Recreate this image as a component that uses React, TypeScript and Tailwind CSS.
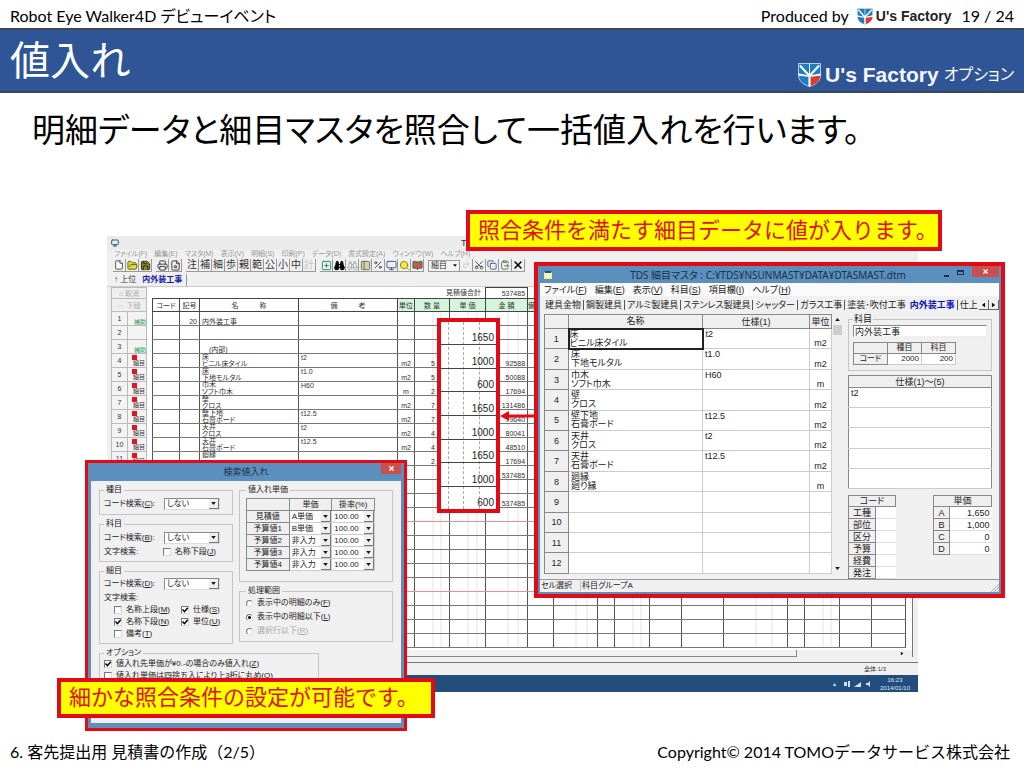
import type { ReactNode } from "react";
import {
  File,
  FolderOpen,
  Save,
  Printer,
  FileSearch,
  Scissors,
  Copy,
  ClipboardPaste,
  X,
  Binoculars,
  Monitor,
  Search,
  Percent,
  PanelLeft,
  SquarePlus,
  BookOpen,
  Redo2,
} from "lucide-react";

function Shield({ className }: { className: string }) {
  return (
    <svg viewBox="0 0 24 25" className={className} aria-hidden="true">
      <path d="M.5.500h23V12c0 7-5 10.500-11.500 12.500C5.500 22.500.5 19 .5 12z" fill="#1f7dc1" stroke="#dfe9f3" strokeWidth=".8" />
      <path d="M12 13h11c-.3 5.500-4 9-11 11z" fill="#e0392f" />
      <path d="M0 10.800L11 13l-1 1.300L0 13zM24 10.800L13 13l1 1.300 10-1.300z" fill="#fff" />
      <path d="M2 2.500L12 13.500 22 2.500" stroke="#fff" strokeWidth="2.200" fill="none" />
      <path d="M12 .5V12" stroke="#fff" strokeWidth="1" />
      <path d="M12 11.500v13" stroke="#fff" strokeWidth="2.200" />
    </svg>
  );
}

function Caret({ className }: { className: string }) {
  return (
    <svg viewBox="0 0 6 4" className={className} aria-hidden="true">
      <path d="M0 0h6L3 4z" fill="#111" />
    </svg>
  );
}

function Combo({ label, value, flat }: { label: string; value: string; flat?: boolean }) {
  return (
    <span
      className={
        flat
          ? "relative flex h-[11px] items-center bg-white"
          : "relative flex h-3 w-14 items-center border border-[#8a8a8a] border-r-[#ddd] border-b-[#ddd] bg-white"
      }
    >
      <select aria-label={label} defaultValue={value} className="h-full w-full appearance-none bg-transparent pl-[2px] leading-[10px]">
        <option>{value}</option>
      </select>
      <span className="pointer-events-none absolute inset-y-0 right-0 flex w-[10px] items-center justify-center border-r border-b border-[#777] bg-[#eee]">
        <Caret className="h-[3px] w-[5px]" />
      </span>
    </span>
  );
}

function Check({ label, k, checked }: { label: string; k: string; checked?: boolean }) {
  return (
    <label className="flex h-3 items-center gap-1 whitespace-nowrap">
      <span className="relative flex size-2">
        <input
          type="checkbox"
          defaultChecked={checked}
          className="peer size-2 appearance-none border border-[#d8d8d8] border-t-[#777] border-l-[#777] bg-white"
        />
        <svg viewBox="0 0 8 8" className="pointer-events-none absolute inset-0 hidden size-2 peer-checked:block" aria-hidden="true">
          <path d="M1.500 3.500l2 2.200L6.800 1.800" stroke="#000" strokeWidth="1.500" fill="none" />
        </svg>
      </span>
      <span>
        {label}(<u>{k}</u>)
      </span>
    </label>
  );
}

function Radio({ label, k, checked, disabled }: { label: string; k: string; checked?: boolean; disabled?: boolean }) {
  return (
    <label className={disabled ? "flex h-[14px] items-center gap-1 text-[#aaa]" : "flex h-[14px] items-center gap-1"}>
      <span className="relative flex size-[7px] items-center justify-center">
        <input
          type="radio"
          name="range"
          defaultChecked={checked}
          disabled={disabled}
          className="peer size-[7px] appearance-none rounded-full border border-[#ddd] border-t-[#777] border-l-[#777] bg-white"
        />
        <span className="pointer-events-none absolute hidden size-[3px] rounded-full bg-black peer-checked:block" />
      </span>
      <span>
        {label}(<u>{k}</u>)
      </span>
    </label>
  );
}

function Group({ title, className, children }: { title: string; className: string; children: ReactNode }) {
  return (
    <fieldset className={`border border-[#c4c4c4] ${className}`}>
      <legend className="px-[2px] leading-[10px]">{title}</legend>
      {children}
    </fieldset>
  );
}

type LedgerRow = { code?: string; mark?: "sub" | "item"; a?: string; b?: string; spec?: string; unit?: string; qty?: string; sum?: string };

const ledger: LedgerRow[] = [
  { mark: "sub", code: "20", b: "内外装工事" },
  {},
  { mark: "sub", b: "　(内部)" },
  { mark: "item", a: "床", b: "ビニル床タイル", spec: "t2", unit: "m2", qty: "5", sum: "92588" },
  { mark: "item", a: "床", b: "下地モルタル", spec: "t1.0", unit: "m2", qty: "5", sum: "50088" },
  { mark: "item", a: "巾木", b: "ソフト巾木", spec: "H60", unit: "m", qty: "2", sum: "17694" },
  { mark: "item", a: "壁", b: "クロス", unit: "m2", qty: "7", sum: "131486" },
  { mark: "item", a: "壁下地", b: "石膏ボード", spec: "t12.5", unit: "m2", qty: "7", sum: "79640" },
  { mark: "item", a: "天井", b: "クロス", spec: "t2", unit: "m2", qty: "4", sum: "80041" },
  { mark: "item", a: "天井", b: "石膏ボード", spec: "t12.5", unit: "m2", qty: "4", sum: "48510" },
  { mark: "item", a: "廻縁", qty: "2", sum: "17694" },
  { sum: "537485" },
  {},
  { sum: "537485" },
  {},
  {},
  {},
  {},
  {},
  {},
  {},
  {},
  {},
  {},
];

const numberedRows = 11;
const tailColumns = ["a", "b", "c", "d", "e", "f", "g", "h", "i", "j"];
const faint = "bg-[linear-gradient(to_right,transparent_50%,#e2e2e2_50%,#e2e2e2_calc(50%+1px),transparent_0,transparent_75%,#e2e2e2_75%,#e2e2e2_calc(75%+1px),transparent_0)]";

function LedgerTable() {
  return (
    <table className="w-full table-fixed border-collapse text-[7px] leading-[7px] text-[#333]">
      <colgroup>
        <col className="w-4" />
        <col className="w-[19px]" />
        <col className="w-[6px]" />
        <col className="w-[27px]" />
        <col className="w-5" />
        <col className="w-[99px]" />
        <col className="w-[99px]" />
        <col className="w-[17px]" />
        <col className="w-[35px]" />
        <col className="w-9" />
        <col className="w-[42px]" />
        <col className="w-[26px]" />
        <col className="w-11" />
        <col className="w-[17px]" />
        <col className="w-[35px]" />
        <col className="w-8" />
        <col className="w-[42px]" />
        <col className="w-16" />
        <col className="w-[17px]" />
        <col className="w-[35px]" />
        <col className="w-8" />
        <col />
      </colgroup>
      <thead>
        <tr className="h-[11px]">
          <th colSpan={2} className="border border-[#bbb] bg-[#eee] font-normal text-[#aaa]">⌂ 取消</th>
          <td colSpan={6} />
          <td colSpan={2} className="pr-1 text-right whitespace-nowrap">見積値合計</td>
          <td className="border border-[#444] pr-[2px] text-right">537485</td>
          <td colSpan={11} />
        </tr>
        <tr className="h-[13px]">
          <th colSpan={2} className="border border-[#bbb] bg-[#eee] font-normal text-[#aaa]">⇔ 下段</th>
          <td />
          <th className="border border-[#444] font-normal">コード</th>
          <th className="border border-[#444] font-normal">記号</th>
          <th className="border border-[#444] font-normal">名　　　称</th>
          <th className="border border-[#444] font-normal">備　　　考</th>
          <th className="border border-[#444] bg-[#d3f5da] font-normal">単位</th>
          <th className="border border-[#444] bg-[#d3f5da] font-normal">数 量</th>
          <th className="border border-[#444] bg-[#d3f5da] font-normal">単 価</th>
          <th className="border border-[#444] bg-[#d3f5da] font-normal">金 額</th>
          <th className="overflow-hidden border border-[#444] bg-[#d3f5da] text-left font-normal">備</th>
          {tailColumns.map((c) => (
            <td key={c} className="border border-[#444]" />
          ))}
        </tr>
      </thead>
      <tbody>
        {ledger.map((r, i) => {
          const cell = i === 14 || i === 19 ? "border-x border-x-[#555] border-b border-b-[#f08c8c] p-0" : "border-x border-x-[#555] border-b border-b-[#777] p-0";
          return (
            <tr key={i} className="h-[14px]">
              <td className="border border-[#bbb] bg-[#f3f3f3] p-0 text-center">{i < numberedRows ? i + 1 : null}</td>
              <td className="border border-[#bbb] bg-[#f3f3f3] p-0 text-[6px] leading-[6px]">
                {r.mark === "sub" && <span className="block pt-[6px] text-right text-[#2f9e63]">補助</span>}
                {r.mark === "item" && (
                  <span className="block pl-1">
                    <span className="block size-[5px] bg-[#e3121b]" />
                    <span className="block text-center">細目</span>
                  </span>
                )}
              </td>
              <td className="p-0" />
              <td className={cell} />
              <td className={`${cell} pr-[2px] text-right align-bottom`}>{r.code}</td>
              <td className={r.b ? `${cell} pl-[2px] align-bottom whitespace-nowrap` : `${cell} pl-[2px] align-top whitespace-nowrap`}>
                {r.a && <span className="block leading-[6px]">{r.a}</span>}
                {r.b && <span className="block">{r.b}</span>}
              </td>
              <td className={`${cell} pl-[2px] align-top`}>{r.spec}</td>
              <td className={`${cell} text-center align-bottom`}>{r.unit}</td>
              <td className={`${cell} ${faint} pl-4 align-bottom`}>{r.qty}</td>
              <td className={`${cell} ${faint}`} />
              <td className={`${cell} ${faint} pr-[2px] text-right align-bottom`}>{r.sum}</td>
              <td className={cell} />
              {tailColumns.map((c) => (
                <td key={c} className={`${cell} ${"bdegij".includes(c) ? "" : faint}`} />
              ))}
            </tr>
          );
        })}
      </tbody>
    </table>
  );
}

function Tool({ label, children }: { label: string; children: ReactNode }) {
  return (
    <button aria-label={label} className="flex h-[13px] w-[13px] shrink-0 items-center justify-center border-r border-b border-[#999] text-[10px] leading-[12px] text-[#333]">
      {children}
    </button>
  );
}

function LedgerWindow() {
  return (
    <section className="absolute top-11 left-[107px] flex h-[456px] w-[811px] flex-col bg-[#f0f0f0] text-[#333]">
      <div className="flex h-[14px] items-center bg-[#ebebeb] pl-1">
        <Monitor className="size-2 text-[#267]" strokeWidth={3} />
        <h2 className="pl-[342px] text-[9px] leading-[12px]">TDS</h2>
      </div>
      <nav className="flex h-2 items-center gap-[7px] pl-[7px] text-[7px] leading-[8px] text-[#999]">
        {["ファイル(F)", "編集(E)", "マスタ(M)", "表示(V)", "明細(S)", "印刷(P)", "データ(D)", "書式設定(A)", "ウィンドウ(W)", "ヘルプ(H)"].map((m) => (
          <a key={m} href="#" className="whitespace-nowrap">{m}</a>
        ))}
      </nav>
      <div className="flex h-[15px] items-center pl-[6px]">
        <Tool label="新規"><File className="size-[10px]" fill="#fff" /></Tool>
        <Tool label="開く"><FolderOpen className="size-[11px] text-[#555f00]" fill="#e8d44a" /></Tool>
        <Tool label="保存"><Save className="size-[11px] text-[#222]" fill="#8c8c20" /></Tool>
        <span className="w-1" />
        <Tool label="印刷"><Printer className="size-[11px]" /></Tool>
        <Tool label="プレビュー"><FileSearch className="size-[11px]" /></Tool>
        <span className="w-1" />
        {["注", "補", "細", "歩", "親", "範", "公", "小", "中"].map((t) => (
          <Tool key={t} label={t}>{t}</Tool>
        ))}
        <Tool label="計"><span className="text-[#c4c4c4]">計</span></Tool>
        <span className="w-1" />
        <Tool label="追加"><SquarePlus className="size-[11px] text-[#178a5a]" /></Tool>
        <Tool label="検索"><Binoculars className="size-[11px] text-black" fill="#000" /></Tool>
        <Tool label="次を検索"><Binoculars className="size-[11px] text-[#aaa]" /></Tool>
        <Tool label="一覧"><PanelLeft className="size-[11px] text-[#666]" fill="#d8d4a0" /></Tool>
        <Tool label="率"><Percent className="size-[10px]" /></Tool>
        <Tool label="画面"><Monitor className="size-[11px] text-[#3c4a9c]" /></Tool>
        <Tool label="参照"><Search className="size-[11px] text-[#8a8200]" fill="#f2e93c" /></Tool>
        <Tool label="台帳"><BookOpen className="size-[11px] text-[#177a4a]" fill="#c55" /></Tool>
        <span className="relative ml-1 flex h-3 w-8 items-center border border-[#999] bg-[#f4f4f4] text-[8px]">
          <select aria-label="種別" defaultValue="細目" className="w-full appearance-none bg-transparent pl-[2px] leading-[10px]">
            <option>細目</option>
          </select>
          <Caret className="pointer-events-none absolute right-[2px] h-[3px] w-1" />
        </span>
        <Tool label="やり直し"><Redo2 className="size-2 text-[#bbb]" /></Tool>
        <Tool label="切り取り"><Scissors className="size-[10px] -rotate-90" /></Tool>
        <Tool label="コピー"><Copy className="size-[10px] text-[#447]" /></Tool>
        <Tool label="貼り付け"><ClipboardPaste className="size-[10px] text-[#464]" /></Tool>
        <Tool label="削除"><X className="size-3 text-black" strokeWidth={3} /></Tool>
      </div>
      <div className="flex h-[14px] items-center gap-[6px] border-b border-[#ccc] pl-[7px] text-[8px] leading-[12px]">
        <span>↑ 上位</span>
        <b className="border-r border-[#999] pr-1 text-[#1818b0]">内外装工事</b>
      </div>
      <div className="mr-[5px] ml-1 flex-1 border-r border-[#777] bg-white pr-[6px]">
        <LedgerTable />
      </div>
      <div className="mr-[5px] ml-1 flex h-[7px] items-center justify-between border-r border-[#777]">
        <span className="h-[7px] w-[686px] border-r border-b border-[#888] bg-[#f2f2f2]" />
        <Caret className="mr-2 h-[3px] w-1 -rotate-90" />
      </div>
      <div className="mt-[5px] flex h-[13px] items-center justify-end border-t border-[#777] pr-8 text-[6px] leading-[10px]">
        <span>全体:1/3</span>
      </div>
      <footer className="flex h-[17px] items-center justify-end gap-[6px] bg-[#214e7d] pr-2 text-[6px] leading-[8px] text-[#dfe8f2]">
        <span>▴</span>
        <svg viewBox="0 0 32 8" className="h-2 w-8" aria-hidden="true">
          <path d="M2 2h3v4H2zM6 1h2v6H6zM12 7l7-5v5zM24 3h2l2-2v6l-2-2h-2z" fill="#d5e0ea" />
        </svg>
        <span className="text-center">16:23<br />2014/01/10</span>
      </footer>
    </section>
  );
}

const prices = ["1650", "1000", "600", "1650", "1000", "1650", "1000", "600"];

function PriceStrip() {
  return (
    <section className="absolute top-[126px] left-[437px] h-[195px] w-[63px] border-4 border-[#e30b13] bg-white">
      <div className="pointer-events-none absolute inset-0 grid grid-cols-[8px_15px_16px_1fr]" aria-hidden="true">
        <span className="border-r border-dashed border-[#aaa]" />
        <span className="border-r border-dashed border-[#aaa]" />
        <span className="border-r border-dashed border-[#aaa]" />
      </div>
      <table className="relative h-full w-full border-collapse text-[10px] leading-[13px] text-[#222]">
        <tbody>
          {prices.map((p, i) => (
            <tr key={i} className="border-b border-[#444] last:border-b-0">
              <td className="p-0 pr-[2px] text-right align-bottom">{p}</td>
            </tr>
          ))}
        </tbody>
      </table>
    </section>
  );
}

const items = [
  ["床", "ビニル床タイル", "t2", "m2"],
  ["床", "下地モルタル", "t1.0", "m2"],
  ["巾木", "ソフト巾木", "H60", "m"],
  ["壁", "クロス", "", "m2"],
  ["壁下地", "石膏ボード", "t12.5", "m2"],
  ["天井", "クロス", "t2", "m2"],
  ["天井", "石膏ボード", "t12.5", "m2"],
  ["廻縁", "廻り縁", "", "m"],
  ["", "", "", ""],
  ["", "", "", ""],
  ["", "", "", ""],
  ["", "", "", ""],
];

const head = "border border-[#888] bg-[#efefef] p-0 font-normal";

function MasterWindow() {
  return (
    <section className="absolute top-[70px] left-[534px] flex h-[336px] w-[471px] flex-col border-4 border-[#e30b13] bg-[#5b8fbd] px-[2px] pb-[2px] text-[9px] leading-[10px] text-[#222]">
      <div className="flex h-[17px] items-center justify-between pl-1">
        <span className="h-2 w-2 border border-t-2 border-[#e8e8c0] border-t-[#2a4a9c] bg-[#fbf7a8]" />
        <h2 className="pl-10 font-['Noto_Sans','Noto_Sans_CJK_JP',sans-serif] text-[10px] leading-[14px] text-[#1d3247]">TDS 細目マスタ : C:¥TDS¥NSUNMAST¥DATA¥DTASMAST.dtm</h2>
        <span className="flex h-full items-start gap-2">
          <button aria-label="最小化" className="mt-[9px] h-[2px] w-[5px] bg-[#1d3247]" />
          <button aria-label="最大化" className="mt-1 h-[5px] w-[7px] border border-t-2 border-[#1d3247]" />
          <button aria-label="閉じる" className="flex h-[11px] w-[27px] items-center justify-center bg-[#c9504f] text-white">
            <X className="size-[7px]" strokeWidth={4} />
          </button>
        </span>
      </div>
      <nav className="flex h-[13px] items-center gap-2 bg-[#fafafa] pl-1">
        {[["ファイル", "F"], ["編集", "E"], ["表示", "V"], ["科目", "S"], ["項目欄", "I"], ["ヘルプ", "H"]].map(([m, k]) => (
          <a key={k} href="#">{m}(<u>{k}</u>)</a>
        ))}
      </nav>
      <div className="flex h-[18px] items-center overflow-hidden bg-[#f0f0f0] pl-[3px]">
        {["建具金物", "鋼製建具", "アルミ製建具", "ステンレス製建具", "シャッター", "ガラス工事", "塗装･吹付工事"].map((t, i) => (
          <button key={t} className={i < 6 ? "shrink-0 border-r border-[#555] px-[2px] whitespace-nowrap" : "shrink-0 px-[2px] whitespace-nowrap"}>{t}</button>
        ))}
        <button className="shrink-0 border-r border-[#555] px-[2px] font-bold whitespace-nowrap text-[#1010b8]">内外装工事</button>
        <button className="min-w-0 shrink overflow-hidden pl-[2px] whitespace-nowrap">仕上</button>
        <button aria-label="前へ" className="ml-auto flex h-[10px] w-[10px] shrink-0 items-center justify-center border-r border-b border-[#666] bg-[#f0f0f0]">
          <Caret className="h-1 w-[5px] rotate-90" />
        </button>
        <button aria-label="次へ" className="flex h-[10px] w-[10px] shrink-0 items-center justify-center border-r border-b border-[#666] bg-[#f0f0f0]">
          <Caret className="h-1 w-[5px] -rotate-90" />
        </button>
      </div>
      <div className="flex min-h-0 flex-1 bg-[#f0f0f0] pr-[7px] pl-1">
        <table className="h-[260px] w-[288px] table-fixed border-collapse bg-white">
          <colgroup>
            <col className="w-6" />
            <col className="w-[134px]" />
            <col />
            <col className="w-[22px]" />
          </colgroup>
          <thead>
            <tr className="h-[14px]">
              <th className={head} />
              <th className={head}>名称</th>
              <th className={head}>仕様(1)</th>
              <th className={head}>単位</th>
            </tr>
          </thead>
          <tbody>
            {items.map(([a, b, s, u], i) => (
              <tr key={i} className="h-5">
                <th className={head}>{i + 1}</th>
                <td className={i === 0 ? "border-2 border-[#222] p-0 leading-[9px]" : "border border-[#ccc] p-0 pl-[2px] leading-[9px]"}>
                  {a && <span className="block">{a}</span>}
                  {b && <span className="block">{b}</span>}
                </td>
                <td className="border border-[#ccc] p-0 pl-[2px] align-top">{s}</td>
                <td className="border border-[#ccc] p-0 text-center align-bottom">{u}</td>
              </tr>
            ))}
          </tbody>
        </table>
        <div className="mr-[5px] flex h-[260px] w-[11px] flex-col items-center bg-[#f0f0f0] py-1">
          <Caret className="h-[3px] w-[5px] rotate-180" />
          <span className="mt-1 h-[10px] w-[9px] bg-[#cdcdcd]" />
          <Caret className="mt-auto h-[3px] w-[5px]" />
        </div>
        <div className="flex flex-1 flex-col">
          <fieldset className="h-[58px] border border-[#c4c4c4] px-1">
            <legend className="px-px leading-[10px]">科目</legend>
            <input aria-label="科目" defaultValue="内外装工事" className="mt-px block h-3 w-full border border-[#eee] border-t-[#888] border-l-[#888] bg-white px-px" />
            <table className="mt-[5px] w-[103px] table-fixed border-collapse bg-white text-[8px] leading-[10px]">
              <tbody>
                <tr><th className={head} /><th className={head}>種目</th><th className={head}>科目</th></tr>
                <tr><th className={head}>コード</th><td className="border border-[#ccc] p-0 pr-[2px] text-right">2000</td><td className="border border-[#ccc] p-0 pr-[2px] text-right">200</td></tr>
              </tbody>
            </table>
          </fieldset>
          <table className="mt-1 h-[116px] w-full border-collapse border border-[#888] bg-white">
            <thead>
              <tr className="h-3"><th className={head}>仕様(1)～(5)</th></tr>
            </thead>
            <tbody>
              {["t2", "", "", "", ""].map((s, i) => (
                <tr key={i} className="h-5"><td className="border-b border-[#ccc] p-0 pl-[2px] align-top">{s}</td></tr>
              ))}
            </tbody>
          </table>
          <div className="mt-[6px] flex items-start justify-between">
            <table className="w-12 table-fixed border-collapse bg-white">
              <colgroup><col className="w-[27px]" /><col /></colgroup>
              <thead><tr><th colSpan={2} className={head}>コード</th></tr></thead>
              <tbody>
                {["工種", "部位", "区分", "予算", "経費", "発注"].map((c) => (
                  <tr key={c} className="h-3"><th className={head}>{c}</th><td className="border-b border-[#ddd] p-0" /></tr>
                ))}
              </tbody>
            </table>
            <table className="w-[59px] table-fixed border-collapse bg-white">
              <colgroup><col className="w-4" /><col /></colgroup>
              <thead><tr><th colSpan={2} className={head}>単価</th></tr></thead>
              <tbody>
                {[["A", "1,650"], ["B", "1,000"], ["C", "0"], ["D", "0"]].map(([c, v]) => (
                  <tr key={c} className="h-3"><th className={head}>{c}</th><td className="border-b border-[#ddd] p-0 pr-[2px] text-right">{v}</td></tr>
                ))}
              </tbody>
            </table>
          </div>
        </div>
      </div>
      <footer className="flex h-[13px] items-center gap-2 border-t border-[#999] bg-[#f0f0f0] pl-px text-[8px]">
        <span>セル選択</span>
        <span className="border-l border-[#bbb] pl-px">科目グループA</span>
        <svg viewBox="0 0 8 8" className="mt-1 ml-auto size-2" aria-hidden="true">
          <path d="M0 8l8-8M3 8l5-5M6 8l2-2" stroke="#999" strokeWidth=".8" />
        </svg>
      </footer>
    </section>
  );
}

const rates = [["見積値", "A単価"], ["予算値1", "B単価"], ["予算値2", "非入力"], ["予算値3", "非入力"], ["予算値4", "非入力"]];

function SearchDialog() {
  return (
    <section className="absolute top-[268px] left-[85px] flex h-[271px] w-[322px] flex-col border-[3px] border-[#e30b13] bg-[#5b8fbd] px-[3px] pb-[5px] text-[8px] leading-[10px] text-[#222]">
      <div className="relative flex h-[18px] items-center justify-center text-[9px] text-[#1d3247]">
        <h2>検索値入れ</h2>
        <button aria-label="閉じる" className="absolute top-0 right-0 flex h-[11px] w-5 items-center justify-center bg-[#c9504f] text-white">
          <X className="size-[7px]" strokeWidth={4} />
        </button>
      </div>
      <div className="flex-1 bg-[#f0f0f0] px-2 pt-1">
        <div className="flex gap-[6px]">
          <div className="flex w-[134px] flex-col gap-1">
            <Group title="種目" className="h-[30px] px-1">
              <div className="mt-[3px] flex items-center justify-between pr-2"><span>コード検索(<u>C</u>):</span><Combo label="種目コード検索" value="しない" /></div>
            </Group>
            <Group title="科目" className="h-[43px] px-1">
              <div className="mt-[3px] flex items-center justify-between pr-2"><span>コード検索(<u>B</u>):</span><Combo label="科目コード検索" value="しない" /></div>
              <div className="mt-[2px] flex items-center justify-between pr-3"><span>文字検索:</span><Check label="名称下段" k="J" /></div>
            </Group>
            <Group title="細目" className="h-[78px] px-1">
              <div className="mt-[2px] flex items-center justify-between pr-2"><span>コード検索(<u>D</u>):</span><Combo label="細目コード検索" value="しない" /></div>
              <p className="mt-[3px]">文字検索:</p>
              <div className="mt-px grid grid-cols-[67px_1fr] pl-[10px]">
                <Check label="名称上段" k="M" />
                <Check label="仕様" k="S" checked />
                <Check label="名称下段" k="N" checked />
                <Check label="単位" k="U" checked />
                <Check label="備考" k="T" />
              </div>
            </Group>
          </div>
          <div className="flex flex-1 flex-col gap-1">
            <Group title="値入れ単価" className="h-[97px] px-[6px]">
              <table className="mt-[3px] w-[129px] table-fixed border-collapse bg-white">
                <thead>
                  <tr className="h-3"><th className={head} /><th className={head}>単価</th><th className={head}>掛率(%)</th></tr>
                </thead>
                <tbody>
                  {rates.map(([n, v]) => (
                    <tr key={n} className="h-3">
                      <th className={head}>{n}</th>
                      <td className="border border-[#ccc] p-0"><Combo flat label={`${n}の単価`} value={v} /></td>
                      <td className="border border-[#ccc] p-0"><Combo flat label={`${n}の掛率`} value="100.00" /></td>
                    </tr>
                  ))}
                </tbody>
              </table>
            </Group>
            <Group title="処理範囲" className="h-14 px-[6px]">
              <Radio label="表示中の明細のみ" k="F" />
              <Radio label="表示中の明細以下" k="L" checked />
              <Radio label="選択行以下" k="R" disabled />
            </Group>
          </div>
        </div>
        <Group title="オプション" className="mt-1 w-[220px] px-1">
          <Check label="値入れ先単価が¥0.-の場合のみ値入れ" k="Z" checked />
          <Check label="値入れ単価は四捨五入により上3桁に丸め" k="O" />
        </Group>
      </div>
    </section>
  );
}

const callout = "absolute flex items-center border-4 border-[#e30b13] bg-[#ffff00] pl-2 text-[22px] leading-[30px] whitespace-nowrap text-[#e01010] [font-feature-settings:normal]";

export default function App() {
  return (
    <div className="flex min-h-screen flex-col overflow-hidden bg-white font-['Liberation_Sans','Noto_Sans_CJK_JP',sans-serif] text-black [font-feature-settings:'palt']">
      <header className="flex h-7 items-center justify-between px-[10px] pt-1 font-['Lato','Noto_Sans_CJK_JP',sans-serif] text-[16px] leading-[20px]">
        <p>Robot Eye Walker4D デビューイベント</p>
        <div className="flex items-center">
          <span>Produced by</span>
          <Shield className="mr-[3px] ml-2 h-[17px] w-4" />
          <b className="font-['Liberation_Sans',sans-serif] text-[14px] text-[#222]">U's Factory</b>
          <span className="ml-[10px]">19 / 24</span>
        </div>
      </header>
      <div className="flex h-[65px] items-center justify-between border-y-2 border-[#3d4654] bg-[#2f5597] px-[10px] text-white">
        <h1 className="text-[40px] leading-[56px] font-normal">値入れ</h1>
        <div className="flex items-center self-end pb-1">
          <Shield className="mr-1 h-6 w-[23px]" />
          <b className="text-[21px] leading-[24px] text-[#f4f6fb]">U's Factory</b>
          <span className="ml-[5px] text-[16px] leading-[20px]">オプション</span>
        </div>
      </div>
      <p className="px-8 pt-[18px] pb-[41px] text-[33px] leading-[40px]">明細データと細目マスタを照合して一括値入れを行います。</p>
      <main className="relative min-h-[548px] flex-1">
        <LedgerWindow />
        <MasterWindow />
        <PriceStrip />
        <svg viewBox="0 0 36 10" className="absolute top-[219px] left-[500px] h-[10px] w-9" aria-hidden="true">
          <path d="M0 5l9-5v3.500h27v3H9V10z" fill="#e30b13" />
        </svg>
        <p className={`${callout} top-[18px] left-[466px] h-[41px] w-[476px]`}>照合条件を満たす細目データに値が入ります。</p>
        <SearchDialog />
        <p className={`${callout} top-[486px] left-[57px] h-10 w-[378px]`}>細かな照合条件の設定が可能です。</p>
      </main>
      <footer className="flex h-7 items-center justify-between pr-[14px] pb-1 pl-[10px] font-['Lato','Noto_Sans_CJK_JP',sans-serif] text-[16px] leading-[20px] [font-feature-settings:normal]">
        <span>6. 客先提出用 見積書の作成（2/5）</span>
        <span>Copyright© 2014 TOMOデータサービス株式会社</span>
      </footer>
    </div>
  );
}
